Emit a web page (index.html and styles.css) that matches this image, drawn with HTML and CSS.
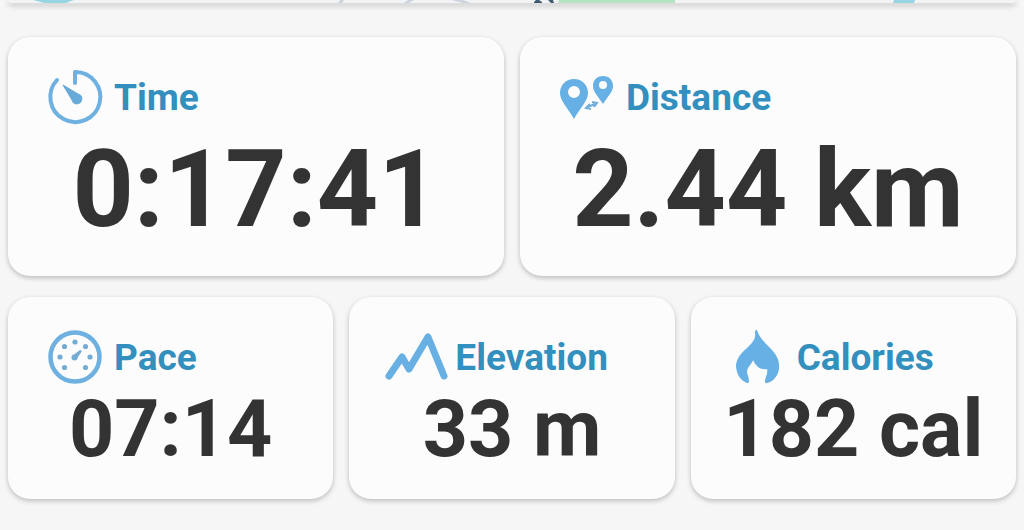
FILE: index.html
```html
<!DOCTYPE html>
<html lang="en">
<head>
<meta charset="utf-8">
<meta name="viewport" content="width=device-width, initial-scale=1">
<title>Activity summary</title>
<link rel="stylesheet" href="styles.css">
</head>
<body>
<div class="map" aria-hidden="true">
  <svg class="map-art" viewBox="0 0 1008 3" preserveAspectRatio="none">
    <path d="M25 0H66L58 3H36Z" fill="#98d5e3"/>
    <path d="M330 3L332 0H336L334 3ZM396 3L400 0H406L401 3ZM443 0H455L463 3H455Z" fill="#ced4de"/>
    <path d="M528 0H531L534 2V3H526V2ZM540 0H545L546 3H543Z" fill="#415c70"/>
    <path d="M551 0H667V3H550Z" fill="#b5e3c2"/>
    <path d="M886 0H907L906 3H885Z" fill="#98d5e3"/>
  </svg>
</div>
<main class="stats">
  <div class="row row-large">
    <section class="card">
      <h2 class="label">
        <svg class="icon" viewBox="0 0 54 54">
          <path d="M9 10A25 25 0 1 0 27 2V13" fill="none" stroke="#6eb1e1" stroke-width="4" stroke-linecap="round" stroke-linejoin="round"/>
          <path d="M15 15L30 24A5 5 0 1 1 24 30Z" fill="#67a9d7" stroke="#67a9d7" stroke-linejoin="round"/>
        </svg>
        Time
      </h2>
      <p class="value">0:17:41</p>
    </section>
    <section class="card">
      <h2 class="label">
        <svg class="icon" viewBox="0 0 54 54">
          <path fill="#66b0e5" fill-rule="evenodd" d="M14 9C6 9 0 15 0 23C0 31 8 38 14 49C20 38 28 31 28 23C28 15 22 9 14 9ZM14 16A6 6 0 1 1 14 28A6 6 0 1 1 14 16Z"/>
          <path fill="#66b0e5" fill-rule="evenodd" d="M43 6C37 6 33 10 33 16C33 22 38 26 43 34C48 26 53 22 53 16C53 10 49 6 43 6ZM43 11A4 4 0 1 1 43 19A4 4 0 1 1 43 11Z"/>
          <path d="M28 37L35 34M30 34L26 38L31 39M32 32L37 33L34 37" fill="none" stroke="#71aedb" stroke-width="2"/>
        </svg>
        Distance
      </h2>
      <p class="value">2.44 km</p>
    </section>
  </div>
  <div class="row row-small">
    <section class="card">
      <h2 class="label">
        <svg class="icon" viewBox="0 0 54 54">
          <circle cx="27" cy="27" r="24.5" fill="none" stroke="#6eb1e1" stroke-width="4.5"/>
          <g fill="#75acd3">
            <circle cx="12" cy="27" r="2.6"/><circle cx="16.500" cy="16.500" r="2.600"/>
            <circle cx="27" cy="12" r="2.6"/><circle cx="37.500" cy="16.500" r="2.600"/>
            <circle cx="42" cy="27" r="2.6"/><circle cx="37.500" cy="37.500" r="2.600"/>
            <circle cx="16.500" cy="37.500" r="2.600"/><circle cx="26.500" cy="27.500" r="3"/>
            <path d="M24 26L32 20L34 21L28 30Z"/>
          </g>
        </svg>
        Pace
      </h2>
      <p class="value">07:14</p>
    </section>
    <section class="card">
      <h2 class="label">
        <svg class="icon" viewBox="0 0 54 54">
          <path d="M0 46L13 27L20 39L39 7L55 46" fill="none" stroke="#68b0e4" stroke-width="7" stroke-linecap="round" stroke-linejoin="round"/>
        </svg>
        Elevation
      </h2>
      <p class="value">33 m</p>
    </section>
    <section class="card">
      <h2 class="label">
        <svg class="icon" viewBox="0 0 54 54">
          <path fill="#67b0e6" d="M26 0C28 7 33 12 40 19C47 26 50 34 47 43C45 48 41 52 36 53C34 54 34 52 34 50C35 46 37 43 36 39C30 40 25 37 22 30C21 34 17 36 16 41C16 45 18 47 18 51C18 54 16 53 14 52C8 49 5 42 5 35C6 26 13 21 18 16C22 12 25 8 24 3C24 0 25 -1 26 0Z"/>
        </svg>
        Calories
      </h2>
      <p class="value">182 cal</p>
    </section>
  </div>
</main>
</body>
</html>
```
FILE: styles.css
```css
* {
  box-sizing: border-box;
}

body {
  margin: 0;
  background: #f6f6f6;
  color: #333;
  font-family: Roboto, "Liberation Sans", sans-serif;
}

.map {
  height: 3px;
  margin: 0 8px;
  background: #f2f3f5;
  border-radius: 0 0 12px 12px;
  box-shadow: 0 2px 6px rgba(0, 0, 0, 0.3);
}

.map-art {
  display: block;
  width: 100%;
  height: 3px;
}

.stats {
  display: grid;
  gap: 21px;
  padding: 34px 8px 30px;
}

.row {
  display: grid;
  gap: 16px;
}

.row-large {
  grid-template-columns: repeat(2, 1fr);
}

.row-small {
  grid-template-columns: repeat(3, 1fr);
}

.card {
  background: #fcfcfc;
  border-radius: 22px;
  box-shadow: 0 2px 5px rgba(0, 0, 0, 0.24);
  padding: 31px 0 25px;
}

.label {
  display: flex;
  align-items: center;
  gap: 12px;
  margin: 0;
  padding-left: 40px;
  color: #338fbd;
  font-size: 37px;
  font-weight: 700;
  line-height: 60px;
}

.icon {
  flex: none;
  width: 54px;
  height: 54px;
  margin-bottom: 2px;
  overflow: visible;
}

.value {
  margin: 0;
  font-weight: 700;
  text-align: center;
  white-space: nowrap;
}

.row-large .value {
  font-size: 107px;
  line-height: 123px;
}

.row-small .value {
  font-size: 79px;
  line-height: 82px;
}

.row-small .card {
  padding-bottom: 29px;
}
```
